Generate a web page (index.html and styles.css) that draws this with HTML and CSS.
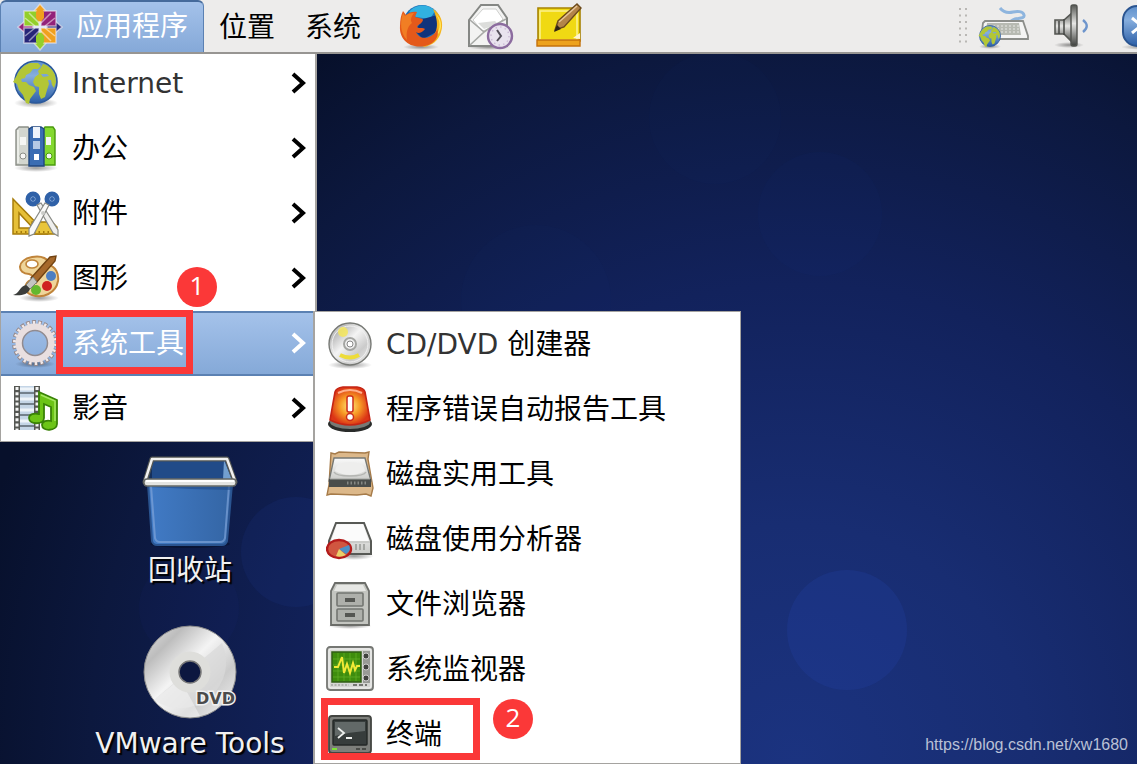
FILE: index.html
```
<!DOCTYPE html>
<html lang="zh-CN">
  <head>
    <meta charset="utf-8">
    <title>桌面</title>
    <link rel="stylesheet" href="styles.css">
  </head>
  <body>
    <svg class="defs" aria-hidden="true">
      <defs>
        <linearGradient id="sea" x1="0" y1="0" x2="0" y2="1"><stop offset="0" stop-color="#5d8fcb"/><stop offset=".35" stop-color="#86aede"/><stop offset="1" stop-color="#2b5ea6"/></linearGradient>
        <linearGradient id="metal" x1="0" y1="0" x2="0" y2="1"><stop offset="0" stop-color="#fafafa"/><stop offset="1" stop-color="#c9cac7"/></linearGradient>
        <linearGradient id="steel" x1="0" y1="0" x2="0" y2="1"><stop offset="0" stop-color="#555753"/><stop offset=".45" stop-color="#e6e6e4"/><stop offset="1" stop-color="#3c3e3b"/></linearGradient>
        <linearGradient id="disc" x1="0" y1="0" x2="1" y2="1"><stop offset="0" stop-color="#e2e2e2"/><stop offset=".22" stop-color="#bdbdbd"/><stop offset=".45" stop-color="#f4f4f4"/><stop offset=".7" stop-color="#cbcbcb"/><stop offset="1" stop-color="#f6f6f6"/></linearGradient>
        <radialGradient id="lamp"><stop offset="0" stop-color="#ffe87a"/><stop offset=".5" stop-color="#f79a25"/><stop offset="1" stop-color="#dc3516"/></radialGradient>
        <radialGradient id="shade"><stop offset="0" stop-color="#000" stop-opacity=".4"/><stop offset="1" stop-color="#000" stop-opacity="0"/></radialGradient>
        <symbol id="globe" viewBox="0 0 48 48">
          <ellipse cx="24" cy="43" rx="22" ry="5" fill="url(#shade)"/>
          <circle cx="24" cy="22" r="21" fill="url(#sea)" stroke="#2c5a9c" stroke-width="1.6"/>
          <path d="M5 15c2-5 7-10 13-12l8 0 3 3-3 3-5 0-3 4-4 2-1 3-4 1 1 3 4 0 3 3 5 2 2 4-3 4-3 4-1 5-3-1-3-8-4-5-2-6-4-2z" fill="#b3c636"/>
          <path d="M31 4c6 2 10 6 12 11l1 7-2 6-2-3-1-5-3 0 1 4-2 6-2 7-4 2-2-5 0-7-4-1-2-4 2-5 4-3-1-3 2-2z" fill="#b3c636"/>
          <path d="M29 14l6 0 2 2-6 1z" fill="#7aa5d8"/>
        </symbol>
        <symbol id="chevron" viewBox="0 0 16 24">
          <path d="M2 2L12 11L2 20" fill="none" stroke="currentColor" stroke-width="4"/>
        </symbol>
      </defs>
    </svg>

    <header class="panel">
      <button class="panel-menu active" type="button">
        <svg class="logo" viewBox="0 0 46 48" aria-hidden="true">
          <g stroke="#f3eef3" stroke-opacity=".6" stroke-width="1.500">
            <path d="M23 1l6 7v8h-12V8z" fill="#f0a01e"/>
            <path d="M23 47l-6-7v-8h12v8z" fill="#93cf2a"/>
            <path d="M1 24l7-6h8v12H8z" fill="#93227a"/>
            <path d="M45 24l-7-6h-8v12h8z" fill="#262578"/>
            <path d="M7 8h15v15H7z" fill="#93cf2a"/>
            <path d="M24 8h15v15H24z" fill="#93227a"/>
            <path d="M7 25h15v15H7z" fill="#262578"/>
            <path d="M24 25h15v15H24z" fill="#f0a01e"/>
          </g>
          <path d="M23 3l4 6v6l-4 5-4-5V9z" fill="#f0a01e"/>
          <path d="M23 45l-4-6v-6l4-5 4 5v6z" fill="#93cf2a"/>
          <path d="M12 10l10 10M8 15l10 8M34 10L24 20M38 15l-10 8M12 38l10-10M8 33l10-8M34 38L24 28M38 33l-10-8" stroke="#fff" stroke-opacity=".5" stroke-width="1.500"/>
          <path d="M23 18v12M17 24h12" stroke="#fff" stroke-opacity=".7" stroke-width="1.500"/>
        </svg>
        <span>应用程序</span>
      </button>
      <button class="panel-menu" type="button">位置</button>
      <button class="panel-menu" type="button">系统</button>

      <nav class="launchers">
        <button class="icon-button" type="button" aria-label="Firefox">
          <svg class="icon" viewBox="0 0 48 48">
            <ellipse cx="24" cy="45" rx="18" ry="3" fill="url(#shade)"/>
            <circle cx="25" cy="22" r="19" fill="#1d70b7"/>
            <path d="M12 10c6-8 19-9 26-1l-5 8-14-2z" fill="#31b1e0"/>
            <path d="M26 17l14-4 1 16-15 8-8-8z" fill="#10347c"/>
            <path d="M36 7c8 5 11 14 8 23-2 8-9 14-18 15l7-8c7-5 10-15 3-30z" fill="#f6b51b"/>
            <path d="M39 12c6 9 4 19-3 24l6-5c4-7 2-14-3-19z" fill="#ffe55b"/>
            <path d="M6 9l3 4c4-3 7-4 11-3l-2 5c3 1 7 1 8 3-1 4-5 4-6 7 2 2 6 0 8 2-3 4-7 5-9 3 2 5 8 8 15 4 4-2 6-5 6-8 3 8-2 16-12 18C12 47 2 37 3 24c0-6 1-11 3-15z" fill="#e4591a"/>
            <path d="M6 11c-3 9-3 20 4 27-1-7 0-13 5-17-2-3-1-6 2-10-4 0-7 1-9 3z" fill="#f17e24"/>
          </svg>
        </button>
        <button class="icon-button" type="button" aria-label="邮件">
          <svg class="icon" viewBox="0 0 48 48">
            <ellipse cx="23" cy="45" rx="22" ry="3" fill="url(#shade)"/>
            <path d="M3 18L15 3h17l9 13v28H3z" fill="#f3f3f2" stroke="#858784" stroke-width="2"/>
            <path d="M7 18L17 7h13l7 10-9 9-12 3z" fill="#fff" stroke="#cfd0ce"/>
            <path d="M4 18l14 12L4 43M18 30l7-5 15-8" fill="none" stroke="#a7a9a6" stroke-width="1.6"/>
            <path d="M12 21l17-2 3 3-14 5z" fill="#dcdddb"/>
            <circle cx="34" cy="34" r="12" fill="#e9e3ee" stroke="#8c6c9f" stroke-width="2.4"/>
            <circle cx="34" cy="34" r="9" fill="none" stroke="#cbbad5" stroke-width="1.4" stroke-dasharray="1.5 3.2"/>
            <path d="M31 28l4 6-4 5" fill="none" stroke="#55505b" stroke-width="2"/>
          </svg>
        </button>
        <button class="icon-button" type="button" aria-label="便笺">
          <svg class="icon" viewBox="0 0 48 48">
            <path d="M3 6h42v33H3z" fill="#f0d913" stroke="#a78303" stroke-width="1.6"/>
            <path d="M5 9h37v29H5z" fill="none" stroke="#fbf18d" stroke-width="1.6"/>
            <path d="M2 38h43v6H2z" fill="#eda21c" stroke="#c4710b" stroke-width="1.4"/>
            <path d="M38 36l7-5v6z" fill="#fff3d3"/>
            <path d="M20 28l3-9L42 2l4 4-17 19z" fill="#b38449" stroke="#6c4a1d" stroke-width="1.4"/>
            <path d="M24 20L42 4" stroke="#e5c497" stroke-width="1.5"/>
            <path d="M19 30l3-7 4 4z" fill="#2e2415"/>
          </svg>
        </button>
      </nav>

      <div class="tray">
        <svg class="grip" viewBox="0 0 10 38" aria-hidden="true">
          <path d="M2 1v37M8 1v37" stroke="#b9b7b4" stroke-width="2" stroke-dasharray="2 4.5"/>
        </svg>
        <button class="icon-button keyboard" type="button" aria-label="输入法">
          <svg class="icon-wide" viewBox="0 0 52 48">
            <path d="M22 6c4 5 9 5 13 4s10-1 11 3-6 3-9 4-5 2-5 5" fill="none" stroke="#8eb5de" stroke-width="3"/>
            <path d="M7 19h38l5 15v3H3l2-16z" fill="#f5f5f4" stroke="#8c8e8a" stroke-width="1.8"/>
            <path d="M9 21h32l2 12H8z" fill="#b7bab2"/>
            <path d="M11 24h31M11 27h31M11 30h31" stroke="#e8e9e6" stroke-dasharray="2 2"/>
            <use href="#globe" x="0" y="23" width="24" height="24"/>
          </svg>
        </button>
        <button class="icon-button speaker" type="button" aria-label="音量">
          <svg class="icon" viewBox="0 0 48 48">
            <ellipse cx="18" cy="43" rx="15" ry="3" fill="url(#shade)"/>
            <path d="M4 18h9l9-8v31l-9-9H4z" fill="url(#steel)" stroke="#555753" stroke-width="1.6"/>
            <path d="M8 19v13M13 17v16" stroke="#444643" stroke-width="1.5"/>
            <rect x="20" y="3" width="6" height="41" rx="2" fill="url(#steel)" stroke="#50524e" stroke-width="1.4"/>
            <path d="M32 18c5 4 5 8 0 12" fill="none" stroke="#6e95cc" stroke-width="2.4"/>
          </svg>
        </button>
        <button class="icon-button bluetooth" type="button" aria-label="蓝牙">
          <svg class="icon" viewBox="0 0 48 48">
            <ellipse cx="24" cy="45" rx="23" ry="3" fill="url(#shade)"/>
            <rect x="3" y="4" width="38" height="40" rx="14" fill="url(#sea)" stroke="#2a5490" stroke-width="2"/>
            <path d="M12 16l18 15-9 7V9l9 7-18 15" fill="none" stroke="#fff" stroke-width="3"/>
          </svg>
        </button>
      </div>
    </header>

    <main class="desktop">
      <svg class="bubbles" aria-hidden="true">
        <circle cx="847" cy="630" r="60" fill="#2443a8" fill-opacity=".26"/>
        <circle cx="820" cy="214" r="62" fill="#2443a8" fill-opacity=".04"/>
        <circle cx="715" cy="118" r="66" fill="#2443a8" fill-opacity=".03"/>
        <circle cx="536" cy="300" r="75" fill="#2443a8" fill-opacity=".03"/>
        <circle cx="296" cy="552" r="55" fill="#2443a8" fill-opacity=".12"/>
        <circle cx="189" cy="608" r="50" fill="#2443a8" fill-opacity=".05"/>
      </svg>

      <a class="launcher trash" href="#trash">
        <svg class="launcher-icon" viewBox="0 0 96 92" aria-hidden="true">
          <defs>
            <linearGradient id="bin" x1="0" y1="0" x2="1" y2="0"><stop offset="0" stop-color="#417bc6"/><stop offset="1" stop-color="#3465a4"/></linearGradient>
          </defs>
          <ellipse cx="48" cy="88" rx="40" ry="4" fill="#000" fill-opacity=".25"/>
          <path d="M6 28h84l-5 57q-1 4-5 4H15q-4 0-5-4z" fill="url(#bin)" stroke="#2a5490" stroke-width="2"/>
          <path d="M9 30l4 52q1 4 5 4h60q4 0 5-4l4-52" fill="none" stroke="#7da3d8" stroke-opacity=".7" stroke-width="2"/>
          <path d="M6 31h84v3L50 33z" fill="#204a87" fill-opacity=".6"/>
          <path d="M10 3h75l8 22H3z" fill="#214b88"/>
          <path d="M82 4l8 20h-9z" fill="#729fcf"/>
          <path d="M10 5v19H5z" fill="#15305c"/>
          <path d="M10 3h75l8 23H3z" fill="none" stroke="#555753" stroke-width="5" stroke-linejoin="round"/>
          <path d="M10 3h75l8 22H3z" fill="none" stroke="#f1f1f0" stroke-width="2.5" stroke-linejoin="round"/>
          <rect x="2" y="23" width="92" height="7" rx="3" fill="#e3e4e2" stroke="#666864" stroke-width="1.4"/>
          <path d="M4 25h88" stroke="#fff" stroke-width="2"/>
        </svg>
        <span>回收站</span>
      </a>
      <a class="launcher vmware" href="#vmware">
        <svg class="launcher-icon" viewBox="0 0 96 96" aria-hidden="true">
          <circle cx="48" cy="47" r="46" fill="url(#disc)" stroke="#8b8b8b"/>
          <path d="M80 18L12 75A46 46 0 0 0 80 18z" fill="#dadada" fill-opacity=".75"/>
          <path d="M12 75L38 54l20 37A46 46 0 0 1 12 75z" fill="#fff" fill-opacity=".4"/>
          <circle cx="48" cy="47" r="16" fill="none" stroke="#dededb" stroke-width="9"/>
          <circle cx="48" cy="47" r="11" fill="#0c1740" stroke="#777" stroke-width="1.500"/>
          <text class="disc-label" x="54" y="79">DVD</text>
        </svg>
        <span>VMware Tools</span>
      </a>

      <ul class="menu menu-apps">
        <li><button class="menu-item" type="button">
          <svg class="icon" aria-hidden="true"><use href="#globe"/></svg>
          <span class="latin">Internet</span>
          <svg class="chevron" aria-hidden="true"><use href="#chevron"/></svg>
        </button></li>
        <li><button class="menu-item" type="button">
          <svg class="icon" viewBox="0 0 48 48" aria-hidden="true">
            <ellipse cx="24" cy="43" rx="22" ry="4" fill="url(#shade)"/>
            <path d="M4 5l3-3h9l2 3v35H4z" fill="#d3d6cf" stroke="#8b8e87" stroke-width="1.4"/>
            <path d="M31 5l2-3h8l2 3v35H31z" fill="#84d930" stroke="#4a9a0e" stroke-width="1.4"/>
            <path d="M17 4l3-2h9l3 2v37H17z" fill="#3b6db3" stroke="#20467f" stroke-width="1.4"/>
            <path d="M21 2h7v11h-7z" fill="#eef3fa"/>
            <path d="M8 12h6v8H8zM34 12h5v8h-5z" fill="#f5f6f3"/>
            <path d="M21 16h7v8h-7z" fill="#b4c9e5"/>
            <rect x="22" y="29" width="5" height="6" fill="#fff"/>
            <circle cx="11" cy="31" r="3" fill="#f7f7f5" stroke="#8b8e87"/>
            <circle cx="37" cy="31" r="3" fill="#f7f7f5" stroke="#4a9a0e"/>
            <path d="M6 5v33" stroke="#f3f4f1" stroke-width="1.5"/>
          </svg>
          <span>办公</span>
          <svg class="chevron" aria-hidden="true"><use href="#chevron"/></svg>
        </button></li>
        <li><button class="menu-item" type="button">
          <svg class="icon" viewBox="0 0 48 48" aria-hidden="true">
            <path fill-rule="evenodd" d="M1 9l34 35H1zM7 23v15h14z" fill="#e6bf38" stroke="#a67c0a" stroke-width="1.500"/>
            <path d="M20 32h20l5 5v7H20z" fill="#e9c53b" stroke="#a67c0a" stroke-width="1.4"/>
            <path d="M4 42h36" stroke="#a67c0a" stroke-width="2" stroke-dasharray="1.500 3"/>
            <circle cx="21" cy="9" r="5" fill="#a9c3e6" stroke="#2f61a8" stroke-width="5"/>
            <circle cx="40" cy="9" r="5" fill="#a9c3e6" stroke="#2f61a8" stroke-width="5"/>
            <circle cx="21" cy="9" r="2" fill="#2f61a8"/>
            <circle cx="40" cy="9" r="2" fill="#2f61a8"/>
            <path d="M25 15l4-2 17 27v6l-5-3z" fill="#efefed" stroke="#888a85" stroke-width="1.2"/>
            <path d="M37 15l-4-2-16 26v7l5-2z" fill="#fafaf9" stroke="#888a85" stroke-width="1.2"/>
            <circle cx="31" cy="23" r="2" fill="#cacbc8"/>
          </svg>
          <span>附件</span>
          <svg class="chevron" aria-hidden="true"><use href="#chevron"/></svg>
        </button></li>
        <li><button class="menu-item" type="button">
          <svg class="icon" viewBox="0 0 48 48" aria-hidden="true">
            <ellipse cx="27" cy="43" rx="20" ry="4" fill="url(#shade)"/>
            <path d="M20 2c10-2 17 2 17 8 7 2 10 9 9 16-2 12-15 18-26 14-9-3-8-12-1-15 3-2 2-5-2-6C5 19 4 5 20 2z" fill="#efd59a" stroke="#c0843a" stroke-width="2"/>
            <ellipse cx="20" cy="9" rx="6" ry="4" fill="#fff" stroke="#c0843a" stroke-width="1.600"/>
            <circle cx="39" cy="21" r="5" fill="#4d7fc2"/>
            <circle cx="35" cy="31" r="5" fill="#cf2020"/>
            <circle cx="24" cy="35" r="5" fill="#64b82e"/>
            <path d="M38 2l6-1-1 5-19 22-5-5z" fill="#a6692b" stroke="#714312" stroke-width="1.400"/>
            <path d="M21 22l4 5-7 7-4-4z" fill="#c4c5c2" stroke="#7d7f7a"/>
            <path d="M1 40c6-1 7-9 13-10l4 4c-2 6-10 7-17 6z" fill="#3b3d3b"/>
          </svg>
          <span>图形</span>
          <svg class="chevron" aria-hidden="true"><use href="#chevron"/></svg>
        </button></li>
        <li><button class="menu-item selected" type="button">
          <svg class="icon" viewBox="0 0 48 48" aria-hidden="true">
            <ellipse cx="23" cy="44" rx="20" ry="4" fill="url(#shade)"/>
            <circle cx="23" cy="23" r="20" fill="none" stroke="#95898b" stroke-width="6" stroke-dasharray="1.300 .7" pathLength="44"/>
            <circle cx="23" cy="23" r="20" fill="none" stroke="#f0e9ea" stroke-width="4" stroke-dasharray=".8 1.200" stroke-dashoffset="-.25" pathLength="44"/>
            <circle cx="23" cy="23" r="16" fill="none" stroke="#e9dfe0" stroke-width="7"/>
            <circle cx="23" cy="23" r="12.500" fill="none" stroke="#918b90" stroke-width="1.500"/>
          </svg>
          <span>系统工具</span>
          <svg class="chevron" aria-hidden="true"><use href="#chevron"/></svg>
        </button></li>
        <li><button class="menu-item" type="button">
          <svg class="icon" viewBox="0 0 48 48" aria-hidden="true">
            <path d="M2 1h26v44H2z" fill="#555753"/>
            <path d="M8 1h14v44H8z" fill="#c4d5e6"/>
            <path d="M8 8h14M8 19h14M8 30h14M8 41h14" stroke="#73808c" stroke-width="2"/>
            <path d="M8 4h14M8 14h14M8 25h14M8 36h14" stroke="#eef4f9" stroke-width="3"/>
            <path d="M5 2v43M25 2v43" stroke="#f5f5f5" stroke-width="3" stroke-dasharray="3 2.200"/>
            <path d="M27 7l18 8v24c0 7-15 8-15 1 0-4 5-5 9-4V22l-7-3v14c0 7-15 7-15 0 0-4 5-5 10-4z" fill="#6cc417" stroke="#398206" stroke-width="1.800"/>
            <path d="M29 10l14 6v20" fill="none" stroke="#a5e762" stroke-width="1.500"/>
          </svg>
          <span>影音</span>
          <svg class="chevron" aria-hidden="true"><use href="#chevron"/></svg>
        </button></li>
      </ul>

      <ul class="menu menu-tools">
        <li><button class="menu-item" type="button">
          <svg class="icon" viewBox="0 0 48 48" aria-hidden="true">
            <ellipse cx="24" cy="44" rx="22" ry="4" fill="url(#shade)"/>
            <circle cx="24" cy="23" r="21" fill="url(#disc)" stroke="#777975" stroke-width="1.400"/>
            <circle cx="24" cy="23" r="18" fill="none" stroke="#f1f1f1"/>
            <circle cx="17" cy="11" r="5" fill="#f4e65a" fill-opacity=".85"/>
            <path d="M14 34q10 5 19 0" fill="none" stroke="#eddc3a" stroke-width="4"/>
            <circle cx="24" cy="23" r="6" fill="#efefef" stroke="#a4a5a2" stroke-width="2"/>
            <circle cx="24" cy="23" r="3" fill="#fff" stroke="#888"/>
          </svg>
          <span class="latin">CD/DVD <span class="cjk">创建器</span></span>
        </button></li>
        <li><button class="menu-item" type="button">
          <svg class="icon" viewBox="0 0 48 48" aria-hidden="true">
            <ellipse cx="24" cy="38" rx="22" ry="8" fill="#292b2a"/>
            <ellipse cx="24" cy="36" rx="20" ry="7" fill="#777975"/>
            <path d="M9 6q1-4 8-5h14q7 1 8 5l5 28q-20 10-40 0z" fill="url(#lamp)" stroke="#c52514" stroke-width="1.600"/>
            <path d="M12 7q12-6 24 0" fill="none" stroke="#ffb08c" stroke-width="2"/>
            <rect x="21" y="10" width="6" height="16" rx="2" fill="#fff" stroke="#cc2c1c" stroke-width="1.500"/>
            <circle cx="24" cy="31" r="3.500" fill="#fff" stroke="#cc2c1c" stroke-width="1.500"/>
          </svg>
          <span>程序错误自动报告工具</span>
        </button></li>
        <li><button class="menu-item" type="button">
          <svg class="icon" viewBox="0 0 48 48" aria-hidden="true">
            <path d="M5 2l4 1 4-2 26 1 4-1-1 7 5 29-2 8-5-2-9 1-26-1-4 1 2-10z" fill="#dcb88a" stroke="#a67b49" stroke-width="1.400"/>
            <path d="M8 7h31l6 23H3z" fill="url(#metal)" stroke="#767874" stroke-width="1.400"/>
            <path d="M9 20q1-9 15-9t15 9q-7 4-15 4t-15-4z" fill="#eeeeed"/>
            <path d="M8 21q2 4 16 4t16-4" fill="none" stroke="#b4b5b2" stroke-width="1.500"/>
            <path d="M3 28h42v8H3z" fill="#4a4d4b"/>
            <path d="M4 28h40" stroke="#a2a5a1"/>
            <path d="M21 32h20" stroke="#858884" stroke-width="3" stroke-dasharray="1.500 2"/>
          </svg>
          <span>磁盘实用工具</span>
        </button></li>
        <li><button class="menu-item" type="button">
          <svg class="icon" viewBox="0 0 48 48" aria-hidden="true">
            <ellipse cx="28" cy="40" rx="20" ry="4" fill="url(#shade)"/>
            <path d="M10 7h28l7 18v13H3V25z" fill="url(#metal)" stroke="#575955" stroke-width="2"/>
            <path d="M11 9h26l6 16H5z" fill="#fbfbfb"/>
            <path d="M4 26h40" stroke="#c5c6c3" stroke-width="1.500"/>
            <path d="M30 28v6M34 28v6M38 28v6" stroke="#9b9d99" stroke-width="1.600"/>
            <ellipse cx="13" cy="33" rx="12" ry="9" fill="#d05640" stroke="#b41b1b" stroke-width="2.400"/>
            <path d="M13 33l10-4q3 5-3 9z" fill="#4c90c7"/>
            <path d="M13 33l7 6q-6 3-10 1z" fill="#ead069"/>
          </svg>
          <span>磁盘使用分析器</span>
        </button></li>
        <li><button class="menu-item" type="button">
          <svg class="icon" viewBox="0 0 48 48" aria-hidden="true">
            <ellipse cx="24" cy="45" rx="22" ry="3" fill="url(#shade)"/>
            <path d="M9 2h30l4 8v34H5V10z" fill="#c3c5c0" stroke="#6b6d69" stroke-width="1.800"/>
            <path d="M11 4h26l3 6H8z" fill="#e6e7e4"/>
            <rect x="11" y="12" width="26" height="13" rx="1" fill="#aeb0ab" stroke="#737571" stroke-width="1.600"/>
            <rect x="11" y="28" width="26" height="12" rx="1" fill="#aeb0ab" stroke="#737571" stroke-width="1.600"/>
            <path d="M19 19h10M19 34h10" stroke="#555753" stroke-width="4"/>
          </svg>
          <span>文件浏览器</span>
        </button></li>
        <li><button class="menu-item" type="button">
          <svg class="icon" viewBox="0 0 48 48" aria-hidden="true">
            <rect x="1" y="1" width="46" height="43" rx="3" fill="#d5d6d3" stroke="#757773" stroke-width="1.800"/>
            <rect x="3" y="3" width="42" height="39" rx="2" fill="none" stroke="#f5f5f4"/>
            <rect x="6" y="6" width="29" height="30" fill="#3e8d0d" stroke="#315d16" stroke-width="1.500"/>
            <path d="M12 7v28M18 7v28M24 7v28M30 7v28M7 13h27M7 19h27M7 25h27M7 31h27" stroke="#61ad27" stroke-width=".8"/>
            <path d="M8 21h4l2-5 2-5 2 16 3-9 3 9 3-10 2 7 2-4h3" fill="none" stroke="#f2e936" stroke-width="2"/>
            <path d="M37 5h7v32h-7z" fill="#989a96"/>
            <circle cx="40" cy="10" r="3" fill="#40423f" stroke="#ccc"/>
            <circle cx="40" cy="21" r="3" fill="#40423f" stroke="#ccc"/>
            <circle cx="40" cy="32" r="3" fill="#40423f" stroke="#ccc"/>
            <path d="M5 39h18" stroke="#8b8d89" stroke-dasharray="2 1.500"/>
            <path d="M27 39h14" stroke="#555753" stroke-width="1.600" stroke-dasharray="4 2"/>
          </svg>
          <span>系统监视器</span>
        </button></li>
        <li><button class="menu-item" type="button">
          <svg class="icon" viewBox="0 0 48 48" aria-hidden="true">
            <ellipse cx="24" cy="43" rx="23" ry="4" fill="url(#shade)"/>
            <rect x="3" y="5" width="42" height="37" rx="3" fill="#7d7f7b" stroke="#434541" stroke-width="1.800"/>
            <rect x="7" y="9" width="34" height="25" rx="1" fill="#373d3c" stroke="#242827" stroke-width="1.400"/>
            <path d="M9 11h30v9q-15 1-30 5z" fill="#626968"/>
            <path d="M12 17l6 5-6 5M20 27h6" fill="none" stroke="#eef0ee" stroke-width="1.800"/>
            <path d="M6 38h5" stroke="#7ee236" stroke-width="2"/>
            <path d="M30 38h12" stroke="#3a3c39" stroke-width="1.600" stroke-dasharray="4 2"/>
          </svg>
          <span>终端</span>
        </button></li>
      </ul>

      <div class="mark-box mark-box-tools"></div>
      <div class="mark-step mark-step-one">1</div>
      <div class="mark-box mark-box-terminal"></div>
      <div class="mark-step mark-step-two">2</div>

      <a class="source" href="https://blog.csdn.net/xw1680">https://blog.csdn.net/xw1680</a>
    </main>
  </body>
</html>
```

FILE: styles.css
```
* {
  box-sizing: border-box;
  margin: 0;
  padding: 0;
}

body {
  height: 100vh;
  overflow: hidden;
  font-family: "DejaVu Sans", "Noto Sans CJK SC", sans-serif;
  font-size: 28px;
  line-height: 40px;
  color: #000;
}

button {
  border: 0;
  background: none;
  font: inherit;
  color: inherit;
  cursor: pointer;
}

ul {
  list-style: none;
}

a {
  text-decoration: none;
}

svg {
  display: block;
  flex: none;
}

.defs {
  position: absolute;
  width: 0;
  height: 0;
}

.icon {
  width: 48px;
  height: 48px;
}

.icon-wide {
  width: 52px;
  height: 48px;
}

/* top panel */
.panel {
  position: relative;
  z-index: 3;
  display: flex;
  align-items: stretch;
  height: 54px;
  overflow: hidden;
  background: #edeceb;
  border-bottom: 2px solid #979592;
}

.panel-menu {
  display: flex;
  align-items: center;
  padding: 3px 15px 0;
  white-space: nowrap;
}

.panel-menu.active {
  gap: 13px;
  padding: 0 15px 0 16px;
  color: #fff;
  background: linear-gradient(#a4c2ea, #85a9d8);
  border: 1px solid #5b81b3;
  border-top: 2px solid #456a9b;
  border-bottom: 0;
  border-radius: 6px 6px 0 0;
}

.logo {
  width: 46px;
  height: 48px;
}

.launchers {
  display: flex;
  align-items: center;
  gap: 21px;
  margin-left: 21px;
}

.tray {
  display: flex;
  align-items: center;
  margin-left: auto;
  margin-right: -31px;
}

.grip {
  width: 10px;
  height: 38px;
  margin-right: 10px;
}

.speaker,
.bluetooth {
  margin-left: 21px;
}

/* desktop */
.desktop {
  position: absolute;
  top: 0;
  right: 0;
  bottom: 0;
  left: 0;
  overflow: hidden;
  background: radial-gradient(ellipse 74% 112% at 70% 100%, #1b3380 0%, #182d72 28%, #12225c 56%, #0c183e 84%, #07102b 100%);
}

.bubbles {
  width: 100%;
  height: 100%;
}

.launcher {
  position: absolute;
  left: 90px;
  display: flex;
  flex-direction: column;
  align-items: center;
  gap: 3px;
  width: 200px;
  color: #f1f1f1;
  text-shadow: 2px 2px 1px #000;
  white-space: nowrap;
}

.launcher-icon {
  width: 96px;
}

.trash {
  top: 456px;
}

.vmware {
  top: 625px;
}

.disc-label {
  font-size: 16px;
  font-weight: bold;
  fill: #4b4b4b;
  stroke: #f1f1f1;
  stroke-width: 3px;
  paint-order: stroke;
  text-shadow: none;
}

/* menus */
.menu {
  position: absolute;
  background: #fff;
  border: 1px solid #a5a3a0;
  overflow: hidden;
}

.menu-apps {
  top: 50px;
  left: 0;
  width: 317px;
  border-right-width: 2px;
}

.menu-tools {
  top: 311px;
  bottom: 0;
  left: 313px;
  width: 428px;
  border-left-width: 2px;
}

.menu-item {
  display: flex;
  align-items: center;
  gap: 12px;
  width: 100%;
  height: 65px;
  padding: 0 8px 0 11px;
  text-align: left;
  white-space: nowrap;
}

.menu-item.selected {
  color: #fff;
  background: linear-gradient(#a4c2ea, #85a9d8);
  border: solid #5b81b3;
  border-width: 2px 0;
}

.latin {
  color: #333;
}

.cjk {
  color: #000;
}

.chevron {
  width: 16px;
  height: 24px;
  margin-left: auto;
}

/* numbered steps */
.mark-box {
  position: absolute;
  border: 7px solid #fb3838;
}

.mark-box-tools {
  top: 310px;
  left: 56px;
  width: 137px;
  height: 64px;
}

.mark-box-terminal {
  top: 698px;
  left: 321px;
  width: 159px;
  height: 62px;
}

.mark-step {
  position: absolute;
  width: 40px;
  height: 40px;
  border-radius: 50%;
  background: #fb3838;
  color: #fff;
  font-family: "Open Sans", "Noto Sans", sans-serif;
  font-size: 26px;
  line-height: 36px;
  text-align: center;
}

.mark-step-one {
  top: 267px;
  left: 177px;
}

.mark-step-two {
  top: 699px;
  left: 493px;
}

.source {
  position: absolute;
  right: 9px;
  bottom: 8px;
  font-family: "Liberation Sans", Arial, sans-serif;
  font-size: 16px;
  line-height: 22px;
  color: #b9c0d6;
}
```
